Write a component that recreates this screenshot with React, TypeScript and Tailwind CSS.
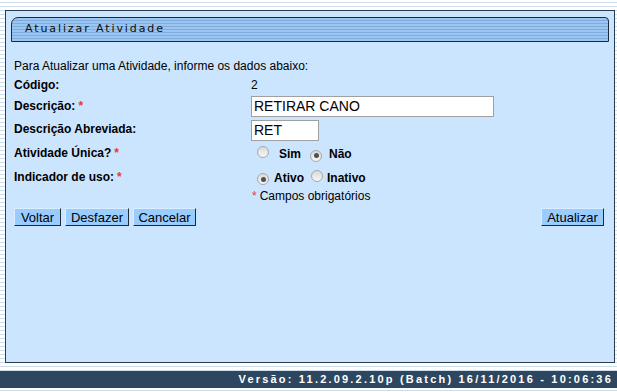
import React from 'react';

const Star = () => <span className="text-[#e53935] ml-[3px]">*</span>;

function Radio({ checked }: { checked?: boolean }) {
	return (
		<span className="inline-flex items-center justify-center w-[12px] h-[12px] rounded-full border border-[#a8a8a8] bg-linear-to-b from-[#d9d9d9] to-[#f7f7f7]">
			{checked && <span className="w-[5px] h-[5px] rounded-full bg-[#505050]" />}
		</span>
	);
}

function Btn({ children, className }: { children: React.ReactNode; className: string }) {
	return (
		<button
			className={`h-[18px] bg-[#99ccff] text-[13px] leading-none text-black text-center border border-t-[#dbeeff] border-l-[#dbeeff] border-r-[#1e2a36] border-b-[#1e2a36] ${className}`}
		>
			{children}
		</button>
	);
}

function Row({
	label,
	required,
	className,
	children,
}: {
	label: string;
	required?: boolean;
	className: string;
	children?: React.ReactNode;
}) {
	return (
		<div className={`flex items-center ${className}`}>
			<div className="w-[237px] font-bold">
				{label}
				{required && <Star />}
			</div>
			<div className="flex items-center">{children}</div>
		</div>
	);
}

export default function App() {
	return (
		<div className="w-[617px] h-[392px] overflow-hidden bg-[repeating-linear-gradient(to_bottom,#ffffff_0px,#ffffff_2px,#cddcea_2px,#cddcea_3px,#ffffff_3px,#ffffff_4px)] font-['Liberation_Sans',Arial,sans-serif] text-[12px] text-black">
			<div className="pt-[10px] pl-[5px]">
				<div className="w-[610px] h-[353px] bg-[#cce5ff] border border-[#2b3d4f] px-[5px] pt-[6px]">
					<div className="h-[25px] flex items-center pl-[13px] border border-[#1c2c3c] rounded-tl-[7px] rounded-tr-[4px] bg-[repeating-linear-gradient(to_bottom,#9cc5ef_0px,#9cc5ef_2px,#7badE0_2px,#7badE0_3px)]">
						<span className="font-['DejaVu_Sans',Verdana,sans-serif] text-[11px] tracking-[1.9px] text-[#0d0d0d]">
							Atualizar Atividade
						</span>
					</div>

					<div className="pl-[3px] pr-[4px]">
						<div className="h-[16px] mt-[16px] flex items-center">
							Para Atualizar uma Atividade, informe os dados abaixo:
						</div>
						<Row label="Código:" className="h-[18px] mt-[2px]">
							<span>2</span>
						</Row>
						<Row label="Descrição:" required className="h-[22px] mt-[1px]">
							<div className="w-[243px] h-[21px] bg-white border border-[#a0a0a0] text-[14px] pl-[2px] flex items-center">
								RETIRAR CANO
							</div>
						</Row>
						<Row label="Descrição Abreviada:" className="h-[24px]">
							<div className="w-[68px] h-[21px] bg-white border border-[#a0a0a0] text-[14px] pl-[2px] flex items-center mt-[2px]">
								RET
							</div>
						</Row>
						<div className="flex h-[24px]">
							<div className="w-[237px] font-bold pt-[3px]">
								Atividade Única?
								<Star />
							</div>
							<div className="flex items-center pt-[2px] font-bold">
								<span className="ml-[6px]">
									<Radio />
								</span>
								<span className="ml-[10px]">Sim</span>
								<span className="ml-[9px]">
									<Radio checked />
								</span>
								<span className="ml-[7px]">Não</span>
							</div>
						</div>
						<div className="flex h-[23px]">
							<div className="w-[237px] font-bold pt-[3px]">
								Indicador de uso:
								<Star />
							</div>
							<div className="flex items-center pt-[2px] font-bold">
								<span className="ml-[6px]">
									<Radio checked />
								</span>
								<span className="ml-[5px]">Ativo</span>
								<span className="ml-[7px]">
									<Radio />
								</span>
								<span className="ml-[4px]">Inativo</span>
							</div>
						</div>
						<div className="flex h-[16px] items-center">
							<div className="w-[238px]" />
							<span className="text-[#e53935]">*</span>
							<span className="ml-[3px]">Campos obrigatórios</span>
						</div>
						<div className="flex justify-between mt-[4px]">
							<div className="flex gap-[4px]">
								<Btn className="w-[47px]">Voltar</Btn>
								<Btn className="w-[64px]">Desfazer</Btn>
								<Btn className="w-[63px]">Cancelar</Btn>
							</div>
							<Btn className="w-[63px] mr-[1px]">Atualizar</Btn>
						</div>
					</div>
				</div>
			</div>
			<div className="mt-[8px] h-[17px] bg-[#2e4761] flex items-center justify-end pr-[4px]">
				<span className="text-white font-bold text-[11px] tracking-[2.2px]">
					Versão: 11.2.09.2.10p (Batch) 16/11/2016 - 10:06:36
				</span>
			</div>
		</div>
	);
}
